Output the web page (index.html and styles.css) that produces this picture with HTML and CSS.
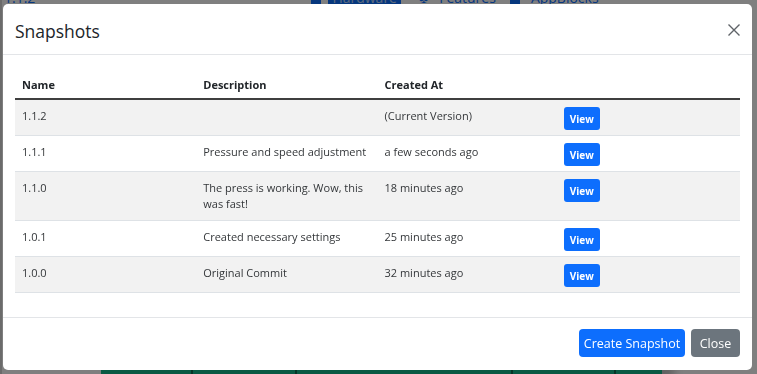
FILE: index.html
```html
<!DOCTYPE html>
<html>
<head>
<meta charset="utf-8">
<title>Snapshots</title>
<link rel="stylesheet" href="styles.css">
</head>
<body>
<div class="page">
    <div class="topbar">
        <span class="crumb">1.1.2</span>
        <nav class="tabs">
            <span class="tab-ico"></span>
            <a class="tab active">Hardware</a>
            <span class="tab-ico club">&#9827;</span>
            <a class="tab">Features</a>
            <span class="tab-ico"></span>
            <a class="tab">AppBlocks</a>
        </nav>
    </div>
    <div class="boards">
        <div class="board b1"></div>
        <div class="board b2"></div>
        <div class="board b3"></div>
        <div class="board b4"></div>
        <div class="board b5"></div>
    </div>
</div>

<div class="backdrop"></div>

<div class="modal">
    <div class="modal-header">
        <h5 class="modal-title">Snapshots</h5>
        <button class="btn-close" type="button">
            <svg width="12" height="12" viewBox="0 0 12 12"><path d="M0.5 0.5L11.5 11.5M11.5 0.5L0.5 11.5" stroke="#5f6368" stroke-width="1.4" fill="none"/></svg>
        </button>
    </div>
    <div class="modal-body">
        <table class="table">
            <thead>
                <tr><th>Name</th><th>Description</th><th>Created At</th><th></th></tr>
            </thead>
            <tbody>
                <tr class="odd"><td>1.1.2</td><td></td><td>(Current Version)</td><td><button class="btn-view">View</button></td></tr>
                <tr><td>1.1.1</td><td>Pressure and speed adjustment</td><td>a few seconds ago</td><td><button class="btn-view">View</button></td></tr>
                <tr class="odd"><td>1.1.0</td><td>The press is working. Wow, this was fast!</td><td>18 minutes ago</td><td><button class="btn-view">View</button></td></tr>
                <tr><td>1.0.1</td><td>Created necessary settings</td><td>25 minutes ago</td><td><button class="btn-view">View</button></td></tr>
                <tr class="odd"><td>1.0.0</td><td>Original Commit</td><td>32 minutes ago</td><td><button class="btn-view">View</button></td></tr>
            </tbody>
        </table>
    </div>
    <div class="modal-footer">
        <button class="btn btn-primary" type="button">Create Snapshot</button>
        <button class="btn btn-secondary" type="button">Close</button>
    </div>
</div>
</body>
</html>
```

FILE: styles.css
```css
html, body{
    margin:0;
    height:100%;
}

body{
    font-family:"Open Sans", "Noto Sans", sans-serif;
    color:#212529;
    background:#fff;
    overflow:hidden;
}

/* page behind the dialog */
.page{
    height:100%;
    display:flex;
    flex-direction:column;
    justify-content:space-between;
    border-left:2px solid #d6d6d6;
    box-sizing:border-box;
    overflow:hidden;
}

.topbar{
    display:flex;
    align-items:flex-end;
    height:14px;
    margin-top:-9px;
    padding-left:2px;
    font-size:14px;
    line-height:14px;
    color:#0d6efd;
}

.tabs{
    display:flex;
    align-items:flex-end;
    margin-left:276px;
}

.tab-ico{
    display:inline-block;
    width:10px;
    height:14px;
    background:#0d6efd;
    margin-right:7px;
}
.tab-ico.club{
    background:none;
    width:auto;
    margin-left:8px;
}

.tab{
    padding:0 4px;
    margin-right:10px;
}
.tab.active{
    background:#0d6efd;
    color:#bcd6ff;
}

.boards{
    display:flex;
    height:4px;
    margin-left:99px;
    width:561px;
    box-shadow:12px 0 10px rgba(0,0,0,.7);
}
.board{
    height:100%;
    background:#14b488;
    border-right:2px solid #0a6a4f;
}
.b1{ width:90px; }
.b2{ width:102px; }
.b3{ width:214px; }
.b4{ width:101px; }
.b5{ flex:1; border-right:none; }

.backdrop{
    position:fixed;
    inset:0;
    background:rgba(0,0,0,.5);
}

/* dialog */
.modal{
    position:fixed;
    left:3px;
    top:4px;
    width:749px;
    height:366px;
    background:#fff;
    border-radius:5px;
    display:flex;
    flex-direction:column;
}

.modal-header{
    display:flex;
    align-items:center;
    justify-content:space-between;
    height:50px;
    padding:0 12px 0 12px;
    border-bottom:1px solid #e3e5e8;
}

.modal-title{
    margin:0;
    font-size:17.5px;
    font-weight:500;
    line-height:20px;
    padding-top:3px;
}

.btn-close{
    border:0;
    background:none;
    padding:0;
    width:12px;
    height:12px;
    display:flex;
    margin-top:2px;
}

.modal-body{
    flex:1;
    padding:16px 12px 0 12px;
}

.table{
    width:100%;
    table-layout:fixed;
    border-collapse:collapse;
    font-size:11px;
    line-height:16px;
}

.table th{
    text-align:left;
    font-weight:700;
    padding:6px 7px 5px;
    border-bottom:2px solid #3f3f3f;
}

.table td{
    vertical-align:top;
    padding:8px 7px 8px;
    border-bottom:1px solid #dee2e6;
    color:#34373a;
}

.table tr.odd td{
    background:#f2f2f2;
}

.btn-view{
    display:block;
    width:36px;
    height:23px;
    margin:-1px 0 -3px -2px;
    border:0;
    border-radius:3px;
    background:#0d6efd;
    color:#fff;
    font-family:"Open Sans", sans-serif;
    font-size:10px;
    font-weight:700;
    padding:0;
}

.modal-footer{
    display:flex;
    justify-content:flex-end;
    gap:6px;
    padding:11px 12px 13px;
    border-top:1px solid #e3e5e8;
}

.btn{
    height:28px;
    border:0;
    border-radius:4px;
    color:#fff;
    font-family:"Open Sans", sans-serif;
    font-size:12.5px;
    white-space:nowrap;
    padding:0;
}
.btn-primary{
    background:#0d6efd;
    width:106px;
}
.btn-secondary{
    background:#6c757d;
    width:49px;
}
```
